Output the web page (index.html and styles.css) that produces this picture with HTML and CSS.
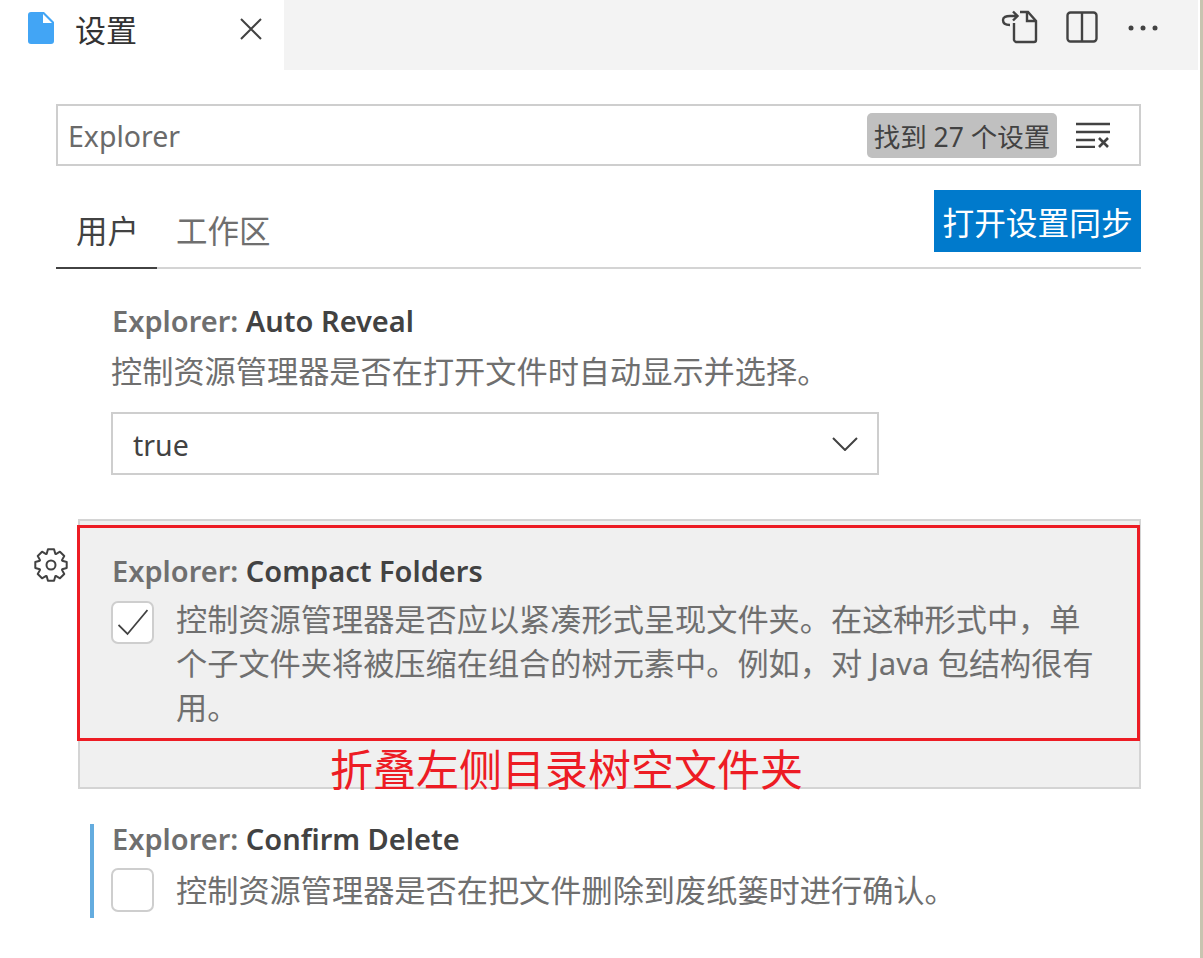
FILE: index.html
```html
<!DOCTYPE html>
<html lang="zh-CN">
<head>
<meta charset="utf-8">
<title>设置</title>
<link rel="stylesheet" href="styles.css">
</head>
<body>
<div class="frame">
  <div class="tabbar">
    <div class="tab">
      <svg class="file-icon" viewBox="0 0 26 32"><path d="M3 0H16L26 10V29a3 3 0 0 1-3 3H3a3 3 0 0 1-3-3V3a3 3 0 0 1 3-3Z" fill="#42a5f5"/><path d="M15 2L24 11H15Z" fill="#fff"/></svg>
      <span class="tab-label">设置</span>
      <svg class="close-icon" viewBox="0 0 22 22"><path d="M1 1L21 21M21 1L1 21" stroke="#424242" stroke-width="2" fill="none"/></svg>
    </div>
    <div class="actions">
      <svg class="act-open" viewBox="0 0 38 36"><path d="M13 13V30a3 3 0 0 0 2 2H33a2 2 0 0 0 2-2V11L27 2H19" fill="none" stroke="#424242" stroke-width="2.4"/><path d="M26 2V11H35" fill="none" stroke="#424242" stroke-width="2.4"/><path d="M9 15C3 15 2 12 2 10C2 7 5 6 9 6H16M12 1.5L16.5 6L12 10.5" fill="none" stroke="#424242" stroke-width="2.4"/></svg>
      <svg class="act-split" viewBox="0 0 32 32"><rect x="1.5" y="1.5" width="29" height="29" rx="3" fill="none" stroke="#424242" stroke-width="2.4"/><path d="M16 2V30" stroke="#424242" stroke-width="2.4"/></svg>
      <svg class="act-more" viewBox="0 0 30 6"><circle cx="3" cy="3" r="2.5" fill="#424242"/><circle cx="15" cy="3" r="2.5" fill="#424242"/><circle cx="27" cy="3" r="2.5" fill="#424242"/></svg>
    </div>
  </div>

  <main class="main">
    <div class="search">
      <span class="search-value">Explorer</span>
      <span class="badge">找到 27 个设置</span>
      <svg class="clear-icon" viewBox="0 0 34 26"><path d="M0 2H34M0 10H34M0 18H19M0 25H19" stroke="#424242" stroke-width="2.4" fill="none"/><path d="M23 16L32 25M32 16L23 25" stroke="#424242" stroke-width="2.6" fill="none"/></svg>
    </div>

    <div class="scope-row">
      <div class="scopes">
        <span class="scope scope-active">用户</span>
        <span class="scope">工作区</span>
      </div>
      <button class="sync-btn">打开设置同步</button>
    </div>

    <section class="setting-auto">
      <div class="title"><span class="cat">Explorer: </span><span class="key">Auto Reveal</span></div>
      <div class="desc-plain">控制资源管理器是否在打开文件时自动显示并选择。</div>
      <div class="select">
        <span>true</span>
        <svg class="chevron" viewBox="0 0 26 14"><path d="M1 1L13 13L25 1" fill="none" stroke="#424242" stroke-width="2"/></svg>
      </div>
    </section>

    <section class="setting-compact">
      <svg class="gear" viewBox="0 0 34 34"><path d="M12.7 5.8L13.95 1.3H20.05L21.3 5.8L21.88 6.04L25.95 3.74L30.26 8.05L27.96 12.12L28.2 12.7L32.7 13.95V20.05L28.2 21.3L27.96 21.88L30.26 25.95L25.95 30.26L21.88 27.96L21.3 28.2L20.05 32.7H13.95L12.7 28.2L12.12 27.96L8.05 30.26L3.74 25.95L6.04 21.88L5.8 21.3L1.3 20.05V13.95L5.8 12.7L6.04 12.12L3.74 8.05L8.05 3.74L12.12 6.04Z" fill="none" stroke="#424242" stroke-width="2" stroke-linejoin="round"/><circle cx="17" cy="17" r="4.5" fill="none" stroke="#424242" stroke-width="2"/></svg>
      <div class="title"><span class="cat">Explorer: </span><span class="key">Compact Folders</span></div>
      <div class="check-row">
        <span class="checkbox">
          <svg class="tick" viewBox="0 0 30 30"><path d="M0.5 17L9.5 26L29.5 2" fill="none" stroke="#424242" stroke-width="1.8"/></svg>
        </span>
        <div class="desc">控制资源管理器是否应以紧凑形式呈现文件夹。在这种形式中，单<br>个子文件夹将被压缩在组合的树元素中。例如，对 Java 包结构很有<br>用。</div>
      </div>
      <div class="annotation-box"></div>
      <div class="annotation-text">折叠左侧目录树空文件夹</div>
    </section>

    <section class="setting-confirm">
      <div class="title"><span class="cat">Explorer: </span><span class="key">Confirm Delete</span></div>
      <div class="check-row">
        <span class="checkbox"></span>
        <div class="desc">控制资源管理器是否在把文件删除到废纸篓时进行确认。</div>
      </div>
    </section>
  </main>
</div>
</body>
</html>
```

FILE: styles.css
```css
* { box-sizing: border-box; }
html, body { margin: 0; height: 100%; background: #fff; }
body {
  font-family: "Noto Sans", "Noto Sans CJK SC", sans-serif;
  font-size: 30px;
  color: #424242;
  overflow: hidden;
}
.frame {
  height: 958px;
  border-right: 3px solid #c8c4b0;
}
.tabbar { display: flex; height: 70px; }
.tab {
  width: 284px;
  display: flex;
  align-items: center;
  padding-left: 28px;
  background: #fff;
}
.file-icon { width: 26px; height: 32px; margin-top: -14px; flex: none; }
.tab-label { margin-left: 21px; font-size: 31px; line-height: 40px; margin-top: -10px; color: #333; white-space: nowrap; }
.close-icon { width: 22px; height: 22px; margin-left: 103px; margin-top: -12px; flex: none; }
.actions {
  flex: 1;
  margin-right: 2px;
  background: #f3f3f3;
  display: flex;
  align-items: flex-start;
  padding-left: 717px;
}
.act-open { width: 38px; height: 36px; margin-top: 10px; flex: none; }
.act-split { width: 32px; height: 32px; margin-top: 11px; margin-left: 27px; flex: none; }
.act-more { width: 30px; height: 6px; margin-top: 25px; margin-left: 30px; flex: none; }

.main { padding: 34px 0 0 56px; width: 1141px; }
.search {
  height: 62px;
  border: 2px solid #cecece;
  display: flex;
  align-items: center;
  padding-left: 10px;
}
.search-value { flex: 1; color: #6a6a6a; font-size: 28.5px; line-height: 42px; margin-top: 2px; }
.badge {
  width: 190px;
  height: 45px;
  background: #c0c0c0;
  border-radius: 5px;
  font-size: 26.5px;
  line-height: 49px;
  text-align: center;
  color: #424242;
  white-space: nowrap;
}
.clear-icon { width: 34px; height: 26px; margin-left: 19px; margin-right: 29px; }

.scope-row {
  display: flex;
  justify-content: space-between;
  align-items: flex-start;
  margin-top: 24px;
  height: 79px;
  border-bottom: 2px solid #d4d4d4;
}
.scopes { display: flex; align-items: flex-end; height: 79px; }
.scope {
  flex: none;
  padding: 0 19px 0 19px;
  height: 79px;
  line-height: 82px;
  color: #6f6f6f;
  font-size: 31.5px;
  white-space: nowrap;
}
.scope-active {
  width: 101px;
  padding-left: 20px;
  padding-right: 0;
  color: #424242;
  border-bottom: 2px solid #424242;
}
.sync-btn {
  width: 207px;
  height: 62px;
  border: 0;
  padding: 0;
  background: #007acc;
  color: #fff;
  font: inherit;
  font-size: 31.7px;
}

.title { font-weight: 600; font-size: 29px; line-height: 30px; white-space: nowrap; }
.cat { color: #6f6f6f; }
.key { color: #424242; }
.desc, .desc-plain { color: #6f6f6f; font-size: 31.2px; line-height: 44px; white-space: nowrap; }

.setting-auto { margin-top: 37px; padding-left: 55px; }
.setting-auto .title { padding-left: 1px; }
.setting-auto .desc-plain { margin-top: 14px; line-height: 42px; }
.select {
  width: 768px;
  height: 63px;
  margin-top: 20px;
  border: 2px solid #cecece;
  display: flex;
  align-items: center;
  justify-content: space-between;
  padding: 2px 19px 0 20px;
  color: #424242;
  font-size: 28.5px;
}
.chevron { width: 26px; height: 14px; margin-top: -2px; }

.setting-compact {
  position: relative;
  margin-top: 44px;
  margin-left: 22px;
  height: 270px;
  padding: 35px 0 0 31px;
  background: #f0f0f0;
  border: 2px solid #d4d4d4;
}
.setting-compact .title { padding-left: 1px; }
.gear { position: absolute; left: -46px; top: 27px; width: 34px; height: 34px; }
.check-row { display: flex; align-items: flex-start; }
.setting-compact .check-row { margin-top: 12px; }
.setting-compact .desc { margin-top: -1px; }
.checkbox {
  flex: none;
  width: 43px;
  height: 43px;
  margin-top: 3px;
  margin-right: 22px;
  background: #fff;
  border: 2px solid #cecece;
  border-radius: 7px;
  display: flex;
  align-items: center;
  justify-content: center;
}
.tick { width: 30px; height: 30px; }
.annotation-box {
  position: absolute;
  left: -3px;
  top: 4px;
  width: 1063px;
  height: 216px;
  border: 3px solid #ed1c24;
}
.annotation-text {
  position: absolute;
  left: 250px;
  top: 216px;
  color: #ed1c24;
  font-family: "Noto Sans CJK SC", sans-serif;
  font-size: 43px;
  line-height: 60px;
  white-space: nowrap;
}

.setting-confirm {
  margin-top: 35px;
  margin-left: 34px;
  height: 94px;
  padding-left: 17px;
  border-left: 4px solid #64acdf;
}
.setting-confirm .title { padding-left: 1px; }
.setting-confirm .check-row { margin-top: 14px; }
.setting-confirm .checkbox { margin-top: 0; height: 44px; }
```
